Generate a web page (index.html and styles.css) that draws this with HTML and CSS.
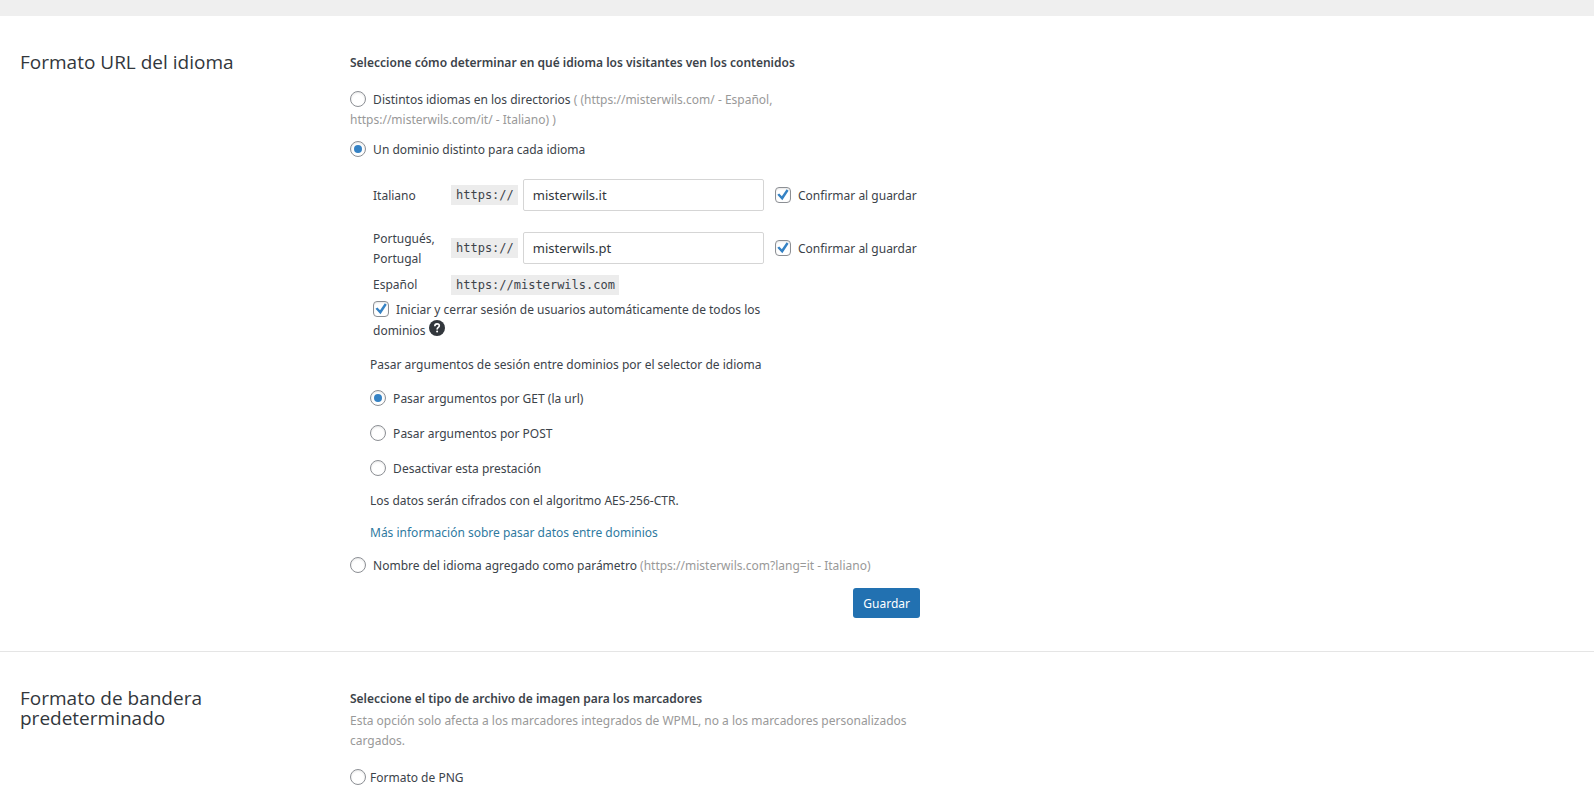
FILE: index.html
```html
<!DOCTYPE html>
<html lang="es">
<head>
  <meta charset="UTF-8" />
  <meta name="viewport" content="width=device-width, initial-scale=1.0" />
  <title>Idiomas</title>
  <link rel="stylesheet" href="styles.css">
</head>
<body>

  <section class="section">
    <div class="section-header">
      <h3>Formato URL del idioma</h3>
    </div>
    <form class="section-content">
      <h4>Seleccione cómo determinar en qué idioma los visitantes ven los contenidos</h4>

      <ul class="url-options">
        <li class="narrow">
          <label><input type="radio" name="url_format" value="1"> Distintos idiomas en los directorios <span class="explanation">( (https://misterwils.com/ - Español, https://misterwils.com/it/ - Italiano) )</span></label>
        </li>
        <li>
          <label><input type="radio" name="url_format" value="2" checked> Un dominio distinto para cada idioma</label>

          <div class="domains">
            <div class="domain-row">
              <label class="domain-name" for="domain-it">Italiano</label>
              <code>https://</code>
              <input type="text" id="domain-it" value="misterwils.it">
              <label><input type="checkbox" checked> Confirmar al guardar</label>
            </div>
            <div class="domain-row">
              <label class="domain-name" for="domain-pt">Portugués, Portugal</label>
              <code>https://</code>
              <input type="text" id="domain-pt" value="misterwils.pt">
              <label><input type="checkbox" checked> Confirmar al guardar</label>
            </div>
            <div class="domain-row domain-default">
              <span class="domain-name">Español</span>
              <code>https://misterwils.com</code>
            </div>
            <div class="domain-login">
              <label><input type="checkbox" checked> Iniciar y cerrar sesión de usuarios automáticamente de todos los dominios</label>
              <a class="help" href="#" aria-label="Ayuda">
                <svg width="16" height="16" viewBox="0 0 16 16">
                  <circle cx="8" cy="8" r="8" fill="#32373c"/>
                  <path d="M5.8 6.2C5.8 4.7 6.7 3.9 8.1 3.9C9.4 3.9 10.3 4.7 10.3 5.8C10.3 7.5 8.1 7.5 8.1 9.4" fill="none" stroke="#fff" stroke-width="1.6"/>
                  <circle cx="8.1" cy="11.6" r="1" fill="#fff"/>
                </svg>
              </a>
            </div>
          </div>

          <div class="session">
            <p>Pasar argumentos de sesión entre dominios por el selector de idioma</p>
            <ul class="session-options">
              <li><label><input type="radio" name="xdomain" value="get" checked> Pasar argumentos por GET (la url)</label></li>
              <li><label><input type="radio" name="xdomain" value="post"> Pasar argumentos por POST</label></li>
              <li><label><input type="radio" name="xdomain" value="off"> Desactivar esta prestación</label></li>
            </ul>
            <p>Los datos serán cifrados con el algoritmo AES-256-CTR.</p>
            <p><a href="#">Más información sobre pasar datos entre dominios</a></p>
          </div>
        </li>
        <li>
          <label><input type="radio" name="url_format" value="3"> Nombre del idioma agregado como parámetro <span class="explanation">(https://misterwils.com?lang=it - Italiano)</span></label>
        </li>
      </ul>

      <div class="buttons">
        <button type="submit">Guardar</button>
      </div>
    </form>
  </section>

  <section class="section">
    <div class="section-header">
      <h3>Formato de bandera predeterminado</h3>
    </div>
    <form class="section-content">
      <h4>Seleccione el tipo de archivo de imagen para los marcadores</h4>
      <p class="explanation">Esta opción solo afecta a los marcadores integrados de WPML, no a los marcadores personalizados cargados.</p>
      <div class="flag-options">
        <label><input type="radio" name="flag_format" value="png">Formato de PNG</label>
      </div>
    </form>
  </section>

</body>
</html>
```

FILE: styles.css
```css
* {
  box-sizing: border-box;
}

body {
  margin: 0;
  border-top: 16px solid #efefef;
  background: #fff;
  color: #3c434a;
  font-family: "Noto Sans", "Open Sans", sans-serif;
  font-size: 12px;
  line-height: 20px;
}

h3, h4, p, ul {
  margin: 0;
  padding: 0;
}

ul {
  list-style: none;
}

a {
  color: #2f7a9f;
  text-decoration: none;
}

.section {
  display: flex;
  padding: 36px 20px 33px;
  border-bottom: 1px solid #e5e5e5;
}

.section-header {
  flex: 0 0 330px;
  padding-right: 80px;
}

.section-header h3 {
  color: #32373c;
  font-family: "Open Sans", sans-serif;
  font-size: 19px;
  font-weight: 400;
  line-height: 20px;
}

.section-content {
  flex: 0 1 570px;
  padding-top: 1px;
}

.section-content h4 {
  font-size: 12px;
  font-weight: 600;
}

.narrow {
  max-width: 450px;
}

.explanation {
  color: #999;
}

input[type="radio"],
input[type="checkbox"] {
  appearance: none;
  display: inline-flex;
  align-items: center;
  justify-content: center;
  width: 16px;
  height: 16px;
  margin: -4px 4px 0 0;
  border: 1px solid #8c8f94;
  background: #fff;
  box-shadow: inset 0 1px 2px rgba(0, 0, 0, 0.1);
  vertical-align: middle;
}

input[type="radio"] {
  border-radius: 50%;
}

input[type="checkbox"] {
  border-radius: 4px;
}

input[type="radio"]:checked::before {
  content: "";
  width: 8px;
  height: 8px;
  border-radius: 50%;
  background: #3582c4;
}

input[type="checkbox"]:checked::before {
  content: "";
  width: 12px;
  height: 12px;
  background: #3582c4;
  clip-path: polygon(4% 50%, 20% 40%, 42% 62%, 82% 4%, 98% 16%, 46% 96%);
}

input[type="text"] {
  width: 241px;
  height: 32px;
  padding: 0 9px;
  border: 1px solid #d5d5d5;
  border-radius: 2px;
  color: #32373c;
  font-family: inherit;
  font-size: 13px;
}

.url-options {
  display: flex;
  flex-direction: column;
  gap: 10px;
  padding-top: 17px;
}

/* dominios */
.domains {
  padding: 15px 0 0 23px;
}

.domain-row {
  display: flex;
  align-items: center;
  min-height: 40px;
  margin-bottom: 12px;
}

.domain-row label {
  padding-top: 2px;
}

.domain-row .domain-name {
  flex: 0 0 78px;
  padding-right: 10px;
}

.domain-row code {
  margin-right: 5px;
}

.domain-row input[type="text"] {
  margin-right: 11px;
}

.domain-row.domain-default {
  min-height: 20px;
  margin: -6px 0 5px;
}

.domain-login {
  max-width: 420px;
}

code {
  padding: 0 4px 0 5px;
  background: #ececec;
  font-family: "DejaVu Sans Mono", monospace;
  font-size: 12px;
}

.help svg {
  vertical-align: -1px;
}

.session {
  display: flex;
  flex-direction: column;
  gap: 12px;
  padding: 14px 0 3px 20px;
}

.session-options {
  display: flex;
  flex-direction: column;
  gap: 15px;
  padding-top: 2px;
}

.buttons {
  display: flex;
  justify-content: flex-end;
  padding-top: 12px;
}

button {
  height: 30px;
  padding: 0 10px;
  border: 0;
  border-radius: 3px;
  background: #2271b1;
  color: #fff;
  font-family: inherit;
  font-size: 12px;
}

.section-content p.explanation {
  padding-top: 2px;
}

.flag-options {
  padding-top: 17px;
}
```
